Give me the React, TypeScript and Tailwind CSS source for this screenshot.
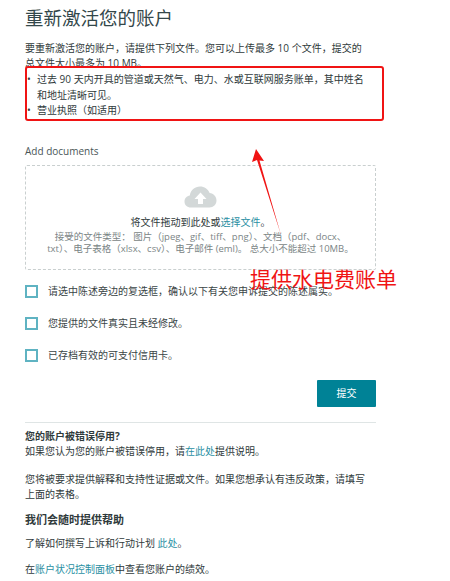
import { ReactNode } from "react";

const FONT = "font-['Open_Sans','Noto_Sans_CJK_SC',sans-serif]";

function Link({ children }: { children: ReactNode }) {
  return <span className="text-[#2a8fa3]">{children}</span>;
}

function CheckRow({ children }: { children: ReactNode }) {
  return (
    <div className="flex items-center h-[13px] gap-[10px]">
      <div className="w-[13px] h-[13px] border-2 border-[#5fb3c2] shrink-0" />
      <span className="text-[10px] leading-[13px] text-[#3a4546]">{children}</span>
    </div>
  );
}

function CloudIcon() {
  return (
    <svg width="33" height="22" viewBox="0 0 33 22">
      {/* cloud with an up arrow cut out */}
      <path
        d="M7 21.5C3 21.5 0.5 19 0.5 15.5C0.5 12.3 2.8 10 5.8 9.5C6.6 4.2 10.8 0.5 16 0.5C20.4 0.5 24 3 25.6 7C29.6 7.3 32.5 10.6 32.5 14.5C32.5 18.6 29.4 21.5 25.5 21.5Z"
        fill="#d3d8d8"
      />
      <path d="M16.5 6.5L22.5 13H19V18H14V13H10.5Z" fill="#ffffff" />
    </svg>
  );
}

export default function App() {
  return (
    <div className={`relative w-[450px] h-[581px] overflow-hidden bg-white text-[#2f3a3b] ${FONT}`}>
      <div className="w-[351px] ml-[25px] pt-[6px] flex flex-col">
        <h1 className="text-[18.5px] leading-[24px] text-[#33474a]">重新激活您的账户</h1>

        <p className="mt-[11px] text-[10px] leading-[15px] w-[345px]">
          要重新激活您的账户，请提供下列文件。您可以上传最多 10 个文件，提交的总文件大小最多为 10 MB。
        </p>

        <ul className="mt-[1px] w-[346px] text-[10px] leading-[15.5px]">
          <li className="flex">
            <span className="w-[12px] pl-[2px] shrink-0">•</span>
            <span>过去 90 天内开具的管道或天然气、电力、水或互联网服务账单，其中姓名和地址清晰可见。</span>
          </li>
          <li className="flex">
            <span className="w-[12px] pl-[2px] shrink-0">•</span>
            <span>营业执照（如适用）</span>
          </li>
        </ul>

        <div className="mt-[25px] text-[10px] leading-[14px] text-[#4a5657]">Add documents</div>

        <div className="mt-[7px] h-[105px] border border-dashed border-[#c9cfcf] rounded-[2px] flex flex-col items-center pt-[20px]">
          <CloudIcon />
          <div className="mt-[7px] text-[10px] leading-[14px]">
            将文件拖动到此处或<Link>选择文件</Link>。
          </div>
          <div className="mt-[2px] w-[308px] text-center text-[9.5px] leading-[12px] text-[#7b8586]">
            接受的文件类型： 图片（jpeg、gif、tiff、png）、文档（pdf、docx、txt）、电子表格（xlsx、csv）、电子邮件 (eml)。 总大小不能超过 10MB。
          </div>
        </div>

        <div className="mt-[15px] flex flex-col gap-[19px]">
          <CheckRow>请选中陈述旁边的复选框，确认以下有关您申诉提交的陈述属实。</CheckRow>
          <CheckRow>您提供的文件真实且未经修改。</CheckRow>
          <CheckRow>已存档有效的可支付信用卡。</CheckRow>
        </div>

        <div className="mt-[18px] flex justify-end">
          <button className="w-[59px] h-[27px] bg-[#008296] rounded-[1px] text-white text-[10px]">提交</button>
        </div>

        <div className="mt-[15px] border-t border-[#dfe5e5] pt-[6px] text-[10px] leading-[15px]">
          <div className="font-bold">您的账户被错误停用?</div>
          <p>
            如果您认为您的账户被错误停用，请<Link>在此处</Link>提供说明。
          </p>
          <p className="mt-[13px] w-[345px]">
            您将被要求提供解释和支持性证据或文件。如果您想承认有违反政策，请填写上面的表格。
          </p>
          <div className="mt-[9px] text-[11px] leading-[18px] font-bold">我们会随时提供帮助</div>
          <p className="mt-[7px]">
            了解如何撰写上诉和行动计划 <Link>此处</Link>。
          </p>
          <p className="mt-[11px]">
            在<Link>账户状况控制面板</Link>中查看您账户的绩效。
          </p>
        </div>
      </div>

      {/* red annotations drawn over the page */}
      <div className="absolute left-[25px] top-[66px] w-[359px] h-[55px] border-2 border-[#f01414] rounded-[3px]" />
      <svg className="absolute left-[245px] top-[145px]" width="40" height="100" viewBox="0 0 40 100">
        <path d="M11 4L19 16L14.5 15.5L36 90L12 15L7 17Z" fill="#f01414" />
      </svg>
      <div className="absolute left-[250px] top-[267px] text-[21px] leading-[24px] text-[#f01414]">提供水电费账单</div>
    </div>
  );
}
